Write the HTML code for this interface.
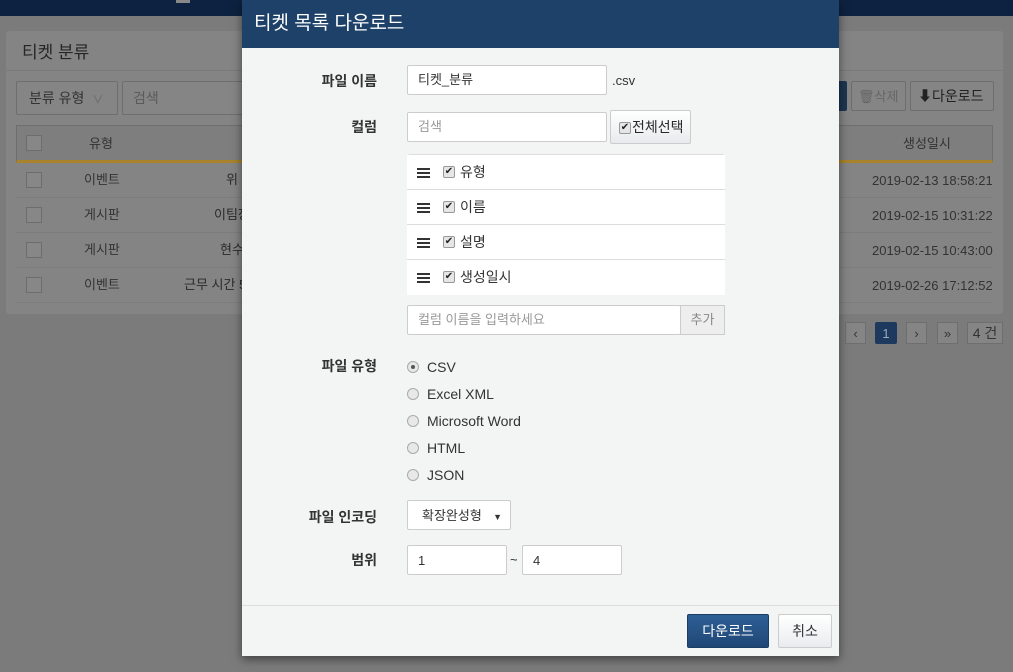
<!DOCTYPE html>
<html><head><meta charset="utf-8"><style>
*{box-sizing:border-box;margin:0;padding:0}
body{width:1013px;height:672px;overflow:hidden;background:#7b7b7b;font-family:"Liberation Sans","Noto Sans CJK KR",sans-serif;font-size:13px;line-height:15px;color:#2a2a2a;position:relative;white-space:nowrap}
.abs{position:absolute}
.top{left:0;top:0;width:1013px;height:16px;background:#0d2240}
.panel{left:6px;top:31px;width:997px;height:283px;background:#848484;border-radius:3px}
.ptitle{left:22px;top:43px;font-size:17px;line-height:20px;color:#262626}
.hline{left:6px;top:70px;width:997px;height:1px;background:#7a7a7a}
.box{border:1px solid #6e6e6e;background:#858585}
.cb{width:16px;height:16px;border:1px solid #6d6d6d;background:#878787}
.row{left:16px;width:977px;height:35px;border-bottom:1px solid #7c7c7c}
.c1{left:84px;color:#333}
.dt{left:872px;color:#333}
.modal{left:242px;top:0;width:597px;height:656px;background:#f3f4f4;box-shadow:0 3px 9px rgba(0,0,0,.5)}
.mh{left:0;top:0;width:597px;height:48px;background:#1e4169;color:#fff;font-size:19px;line-height:22px;padding:13px 0 0 12px}
.lbl{font-weight:bold;font-size:14px;line-height:16px;color:#333;text-align:right;width:120px}
.inp{background:#fff;border:1px solid #ccc;border-radius:2px;height:30px;padding:6px 10px;font-size:13px;line-height:16px;color:#333}
.ph{color:#999}
.li{left:165px;width:318px;height:35px;border-bottom:1px solid #ddd;background:#fff}
.ham{position:absolute;left:10px;top:13px;width:13px;height:10px;border-top:2px solid #333;border-bottom:2px solid #333}
.ham:after{content:"";position:absolute;left:0;top:2px;width:13px;height:2px;background:#333}
.chk{position:absolute;width:12px;height:12px;border:1px solid #999;border-radius:2px;background:#e6e6e6;font-size:10px;line-height:10px;text-align:center;color:#222}
.rad{position:absolute;width:12px;height:12px;border:1px solid #aaa;border-radius:50%;background:#e8e8e8}
.rt{position:absolute;font-size:14px;line-height:16px;color:#333}
</style></head><body>
<div class="abs top"></div>
<div class="abs" style="left:176px;top:0;width:14px;height:3px;background:#888"></div>
<div class="abs panel"></div>
<div class="abs ptitle">티켓 분류</div>
<div class="abs hline"></div>
<div class="abs box" style="left:16px;top:81px;width:102px;height:34px;border-radius:2px;padding:8px 12px;font-size:14px;line-height:16px;color:#333">분류 유형 <span style="color:#666;font-size:11px;margin-left:4px">∨</span></div>
<div class="abs box" style="left:122px;top:81px;width:130px;height:34px;border-radius:2px;padding:8px 10px;font-size:14px;line-height:16px;color:#5a5a5a">검색</div>
<div class="abs" style="left:830px;top:81px;width:17px;height:30px;background:#1d3550;border-radius:2px"></div>
<div class="abs box" style="left:851px;top:81px;width:55px;height:30px;border-radius:2px;padding:7px 6px;color:#666">🗑삭제</div>
<div class="abs box" style="left:910px;top:81px;width:84px;height:30px;border-radius:2px;padding:6px 7px;color:#222;font-size:14px;line-height:16px">⬇다운로드</div>
<div class="abs" style="left:16px;top:125px;width:977px;height:38px;background:#7e7e7e;border:1px solid #6e6e6e;border-bottom:3px solid #a8832c"></div>
<div class="abs cb" style="left:26px;top:135px"></div>
<div class="abs" style="left:89px;top:136px;color:#333">유형</div>
<div class="abs" style="left:903px;top:136px;color:#333">생성일시</div>
<div class="abs row" style="top:163px"></div>
<div class="abs row" style="top:198px"></div>
<div class="abs row" style="top:233px"></div>
<div class="abs row" style="top:268px"></div>
<div class="abs cb" style="left:26px;top:172px"></div><div class="abs c1" style="top:172px">이벤트</div><div class="abs" style="left:226px;top:172px">위</div><div class="abs dt" style="top:173px">2019-02-13 18:58:21</div>
<div class="abs cb" style="left:26px;top:207px"></div><div class="abs c1" style="top:207px">게시판</div><div class="abs" style="left:214px;top:207px">이팀장</div><div class="abs dt" style="top:208px">2019-02-15 10:31:22</div>
<div class="abs cb" style="left:26px;top:242px"></div><div class="abs c1" style="top:242px">게시판</div><div class="abs" style="left:220px;top:242px">현수</div><div class="abs dt" style="top:243px">2019-02-15 10:43:00</div>
<div class="abs cb" style="left:26px;top:277px"></div><div class="abs c1" style="top:277px">이벤트</div><div class="abs" style="left:184px;top:277px">근무 시간 5</div><div class="abs dt" style="top:278px">2019-02-26 17:12:52</div>
<div class="abs box" style="left:845px;top:322px;width:21px;height:22px;text-align:center;color:#333;padding-top:3px">‹</div>
<div class="abs" style="left:875px;top:322px;width:22px;height:22px;background:#1d3a5e;border-radius:2px;text-align:center;padding-top:4px;color:#9ab">1</div>
<div class="abs box" style="left:906px;top:322px;width:21px;height:22px;text-align:center;color:#333;padding-top:3px">›</div>
<div class="abs box" style="left:937px;top:322px;width:21px;height:22px;text-align:center;color:#333;padding-top:3px">»</div>
<div class="abs box" style="left:967px;top:322px;width:36px;height:22px;text-align:center;color:#333;padding-top:3px;font-size:14px">4 건</div>

<div class="abs modal">
<div class="abs mh">티켓 목록 다운로드</div>
<div class="abs lbl" style="left:15px;top:73px">파일 이름</div>
<div class="abs inp" style="left:165px;top:65px;width:200px">티켓_분류</div>
<div class="abs" style="left:370px;top:73px;color:#333">.csv</div>
<div class="abs lbl" style="left:15px;top:119px">컬럼</div>
<div class="abs inp ph" style="left:165px;top:112px;width:200px">검색</div>
<div class="abs" style="left:368px;top:110px;width:81px;height:34px;border:1px solid #ccc;border-radius:2px;background:linear-gradient(#fff,#e8ebee);padding:8px 0 0 8px;font-size:14px;line-height:16px"><span class="chk" style="left:8px;top:11px">✔</span><span style="margin-left:13px">전체선택</span></div>
<div class="abs" style="left:165px;top:154px;width:318px;height:141px;border:1px solid #ddd;border-radius:3px;background:#fff"></div>
<div class="abs li" style="top:155px"><span class="ham"></span><span class="chk" style="left:36px;top:11px">✔</span><span class="rt" style="left:53px;top:9px">유형</span></div>
<div class="abs li" style="top:190px"><span class="ham"></span><span class="chk" style="left:36px;top:11px">✔</span><span class="rt" style="left:53px;top:9px">이름</span></div>
<div class="abs li" style="top:225px"><span class="ham"></span><span class="chk" style="left:36px;top:11px">✔</span><span class="rt" style="left:53px;top:9px">설명</span></div>
<div class="abs li" style="top:260px;border-bottom:none"><span class="ham"></span><span class="chk" style="left:36px;top:11px">✔</span><span class="rt" style="left:53px;top:9px">생성일시</span></div>
<div class="abs inp ph" style="left:165px;top:305px;width:274px">컬럼 이름을 입력하세요</div>
<div class="abs" style="left:438px;top:305px;width:45px;height:30px;border:1px solid #ccc;background:#eee;color:#888;text-align:center;padding-top:6px">추가</div>
<div class="abs lbl" style="left:15px;top:358px">파일 유형</div>
<span class="rad" style="left:165px;top:361px"><span style="position:absolute;left:3px;top:3px;width:4px;height:4px;border-radius:50%;background:#555"></span></span><span class="rt" style="left:185px;top:359px">CSV</span>
<span class="rad" style="left:165px;top:388px"></span><span class="rt" style="left:185px;top:386px">Excel XML</span>
<span class="rad" style="left:165px;top:415px"></span><span class="rt" style="left:185px;top:413px">Microsoft Word</span>
<span class="rad" style="left:165px;top:442px"></span><span class="rt" style="left:185px;top:440px">HTML</span>
<span class="rad" style="left:165px;top:469px"></span><span class="rt" style="left:185px;top:467px">JSON</span>
<div class="abs lbl" style="left:15px;top:509px">파일 인코딩</div>
<div class="abs inp" style="left:165px;top:500px;width:104px;padding-left:14px;padding-top:7px">확장완성형<span style="position:absolute;right:8px;top:8px;font-size:9px">▼</span></div>
<div class="abs lbl" style="left:15px;top:552px">범위</div>
<div class="abs inp" style="left:165px;top:545px;width:100px;padding-top:7px">1</div>
<div class="abs" style="left:268px;top:552px">~</div>
<div class="abs inp" style="left:280px;top:545px;width:100px;padding-top:7px">4</div>
<div class="abs" style="left:0;top:605px;width:597px;height:1px;background:#ddd"></div>
<div class="abs" style="left:445px;top:614px;width:82px;height:34px;background:linear-gradient(#2f5f95,#1f4776);border:1px solid #1b3d66;border-radius:2px;color:#fff;font-size:14px;line-height:16px;text-align:center;padding-top:8px">다운로드</div>
<div class="abs" style="left:536px;top:614px;width:54px;height:34px;background:linear-gradient(#fff,#e9ecef);border:1px solid #ccc;border-radius:2px;color:#333;font-size:14px;line-height:16px;text-align:center;padding-top:8px">취소</div>
</div>
</body></html>
